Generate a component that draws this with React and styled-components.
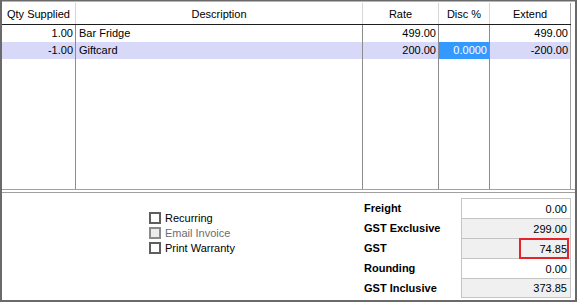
import React from "react";
import styled, { createGlobalStyle } from "styled-components";

const GlobalStyle = createGlobalStyle`
  html, body { margin: 0; padding: 0; background: #ffffff; }
  body { font-family: "Liberation Sans", Arial, sans-serif; font-size: 11px; color: #000; }
  * { box-sizing: border-box; }
`;

const COLS = "74px 287px 76px 51px 81px";

const Frame = styled.div`
  width: 577px;
  height: 302px;
  border-left: 2px solid #6a6a6a;
  border-right: 2px solid #6a6a6a;
  border-bottom: 2px solid #6a6a6a;
  border-top: 1px solid #6a6a6a;
  padding-top: 2px;
  box-shadow: inset 0 1px 0 #b4b4b4;
  display: flex;
  flex-direction: column;
  background: #fff;
`;

const Grid = styled.div`
  width: 569px;
  height: 186px;
  display: flex;
  flex-direction: column;
`;

const HeaderRow = styled.div`
  display: grid;
  grid-template-columns: ${COLS};
  height: 22px;
  border-bottom: 1px solid #1e1e1e;
`;

const HeadCell = styled.div`
  border-right: 1px solid ${(p) => (p.$last ? "#a0a0a0" : "#d6d6d6")};
  display: flex;
  align-items: center;
  justify-content: center;
  line-height: 13px;
  padding-top: 1px;
`;

const Body = styled.div`
  flex: 1;
  display: grid;
  grid-template-columns: ${COLS};
  grid-template-rows: 17px 17px 1fr;
`;

const Cell = styled.div`
  border-right: 1px solid ${(p) => (p.$last ? "#a0a0a0" : "#8c8c8c")};
  background: ${(p) => (p.$selected ? "#3399ff" : p.$hl ? "#d8d8f8" : "#fff")};
  color: ${(p) => (p.$selected ? "#fff" : "#000")};
  display: flex;
  align-items: center;
  justify-content: ${(p) => (p.$left ? "flex-start" : "flex-end")};
  padding: ${(p) => (p.$left ? "0 0 0 3px" : "0 2px 0 0")};
  white-space: nowrap;
  line-height: 13px;
`;

const Panel = styled.div`
  flex: 1;
  border-top: 4px double #a0a0a0;
  display: flex;
`;

const Options = styled.div`
  width: 360px;
  padding: 17px 0 0 147px;
  display: flex;
  flex-direction: column;
`;

const Option = styled.label`
  height: 15px;
  display: flex;
  align-items: center;
  gap: 4px;
  color: ${(p) => (p.$disabled ? "#6d6d6d" : "#000")};
  white-space: nowrap;
`;

const Box = styled.span`
  width: 12px;
  height: 12px;
  border: 2px solid ${(p) => (p.$disabled ? "#8a8a8a" : "#5e5e5e")};
  background: ${(p) => (p.$disabled ? "#ececec" : "#fff")};
  flex: none;
`;

const Totals = styled.div`
  padding-top: 5px;
  display: grid;
  grid-template-columns: 99px 110px;
  grid-auto-rows: 20px;
`;

const Label = styled.div`
  font-weight: bold;
  display: flex;
  align-items: center;
  padding: 0 0 0 2px;
`;

const Value = styled.div`
  position: relative;
  border: 1px solid #c4c4c4;
  border-bottom: ${(p) => (p.$lastRow ? "1px solid #c4c4c4" : "none")};
  height: 20px;
  background: ${(p) => (p.$gray ? "#f0f0f0" : "#fff")};
  display: flex;
  align-items: center;
  justify-content: flex-end;
  padding: 0 3px 0 0;
`;

const Highlight = styled.span`
  position: absolute;
  z-index: 1;
  top: -1px;
  left: 57px;
  width: 50px;
  height: 21px;
  border: 2px solid #e3242b;
  pointer-events: none;
`;

const headers = ["Qty Supplied", "Description", "Rate", "Disc %", "Extend"];
const rows = [
  { qty: "1.00", desc: "Bar Fridge", rate: "499.00", disc: "", ext: "499.00" },
  { qty: "-1.00", desc: "Giftcard", rate: "200.00", disc: "0.0000", ext: "-200.00", hl: true },
];
const totals = [
  { label: "Freight", value: "0.00" },
  { label: "GST Exclusive", value: "299.00", gray: true },
  { label: "GST", value: "74.85", gray: true, mark: true },
  { label: "Rounding", value: "0.00" },
  { label: "GST Inclusive", value: "373.85", gray: true },
];

export default function App() {
  return (
    <>
      <GlobalStyle />
      <Frame>
        <Grid>
          <HeaderRow>
            {headers.map((h, i) => (
              <HeadCell key={h} $last={i === headers.length - 1}>{h}</HeadCell>
            ))}
          </HeaderRow>
          <Body>
            {rows.map((r) => (
              <React.Fragment key={r.desc}>
                <Cell $hl={r.hl}>{r.qty}</Cell>
                <Cell $hl={r.hl} $left>{r.desc}</Cell>
                <Cell $hl={r.hl}>{r.rate}</Cell>
                <Cell $hl={r.hl} $selected={r.hl}>{r.disc}</Cell>
                <Cell $hl={r.hl} $last>{r.ext}</Cell>
              </React.Fragment>
            ))}
            <Cell />
            <Cell />
            <Cell />
            <Cell />
            <Cell $last />
          </Body>
        </Grid>
        <Panel>
          <Options>
            <Option><Box />Recurring</Option>
            <Option $disabled><Box $disabled />Email Invoice</Option>
            <Option><Box />Print Warranty</Option>
          </Options>
          <Totals>
            {totals.map((t, i) => (
              <React.Fragment key={t.label}>
                <Label>{t.label}</Label>
                <Value $gray={t.gray} $lastRow={i === totals.length - 1}>
                  {t.value}
                  {t.mark && <Highlight />}
                </Value>
              </React.Fragment>
            ))}
          </Totals>
        </Panel>
      </Frame>
    </>
  );
}
